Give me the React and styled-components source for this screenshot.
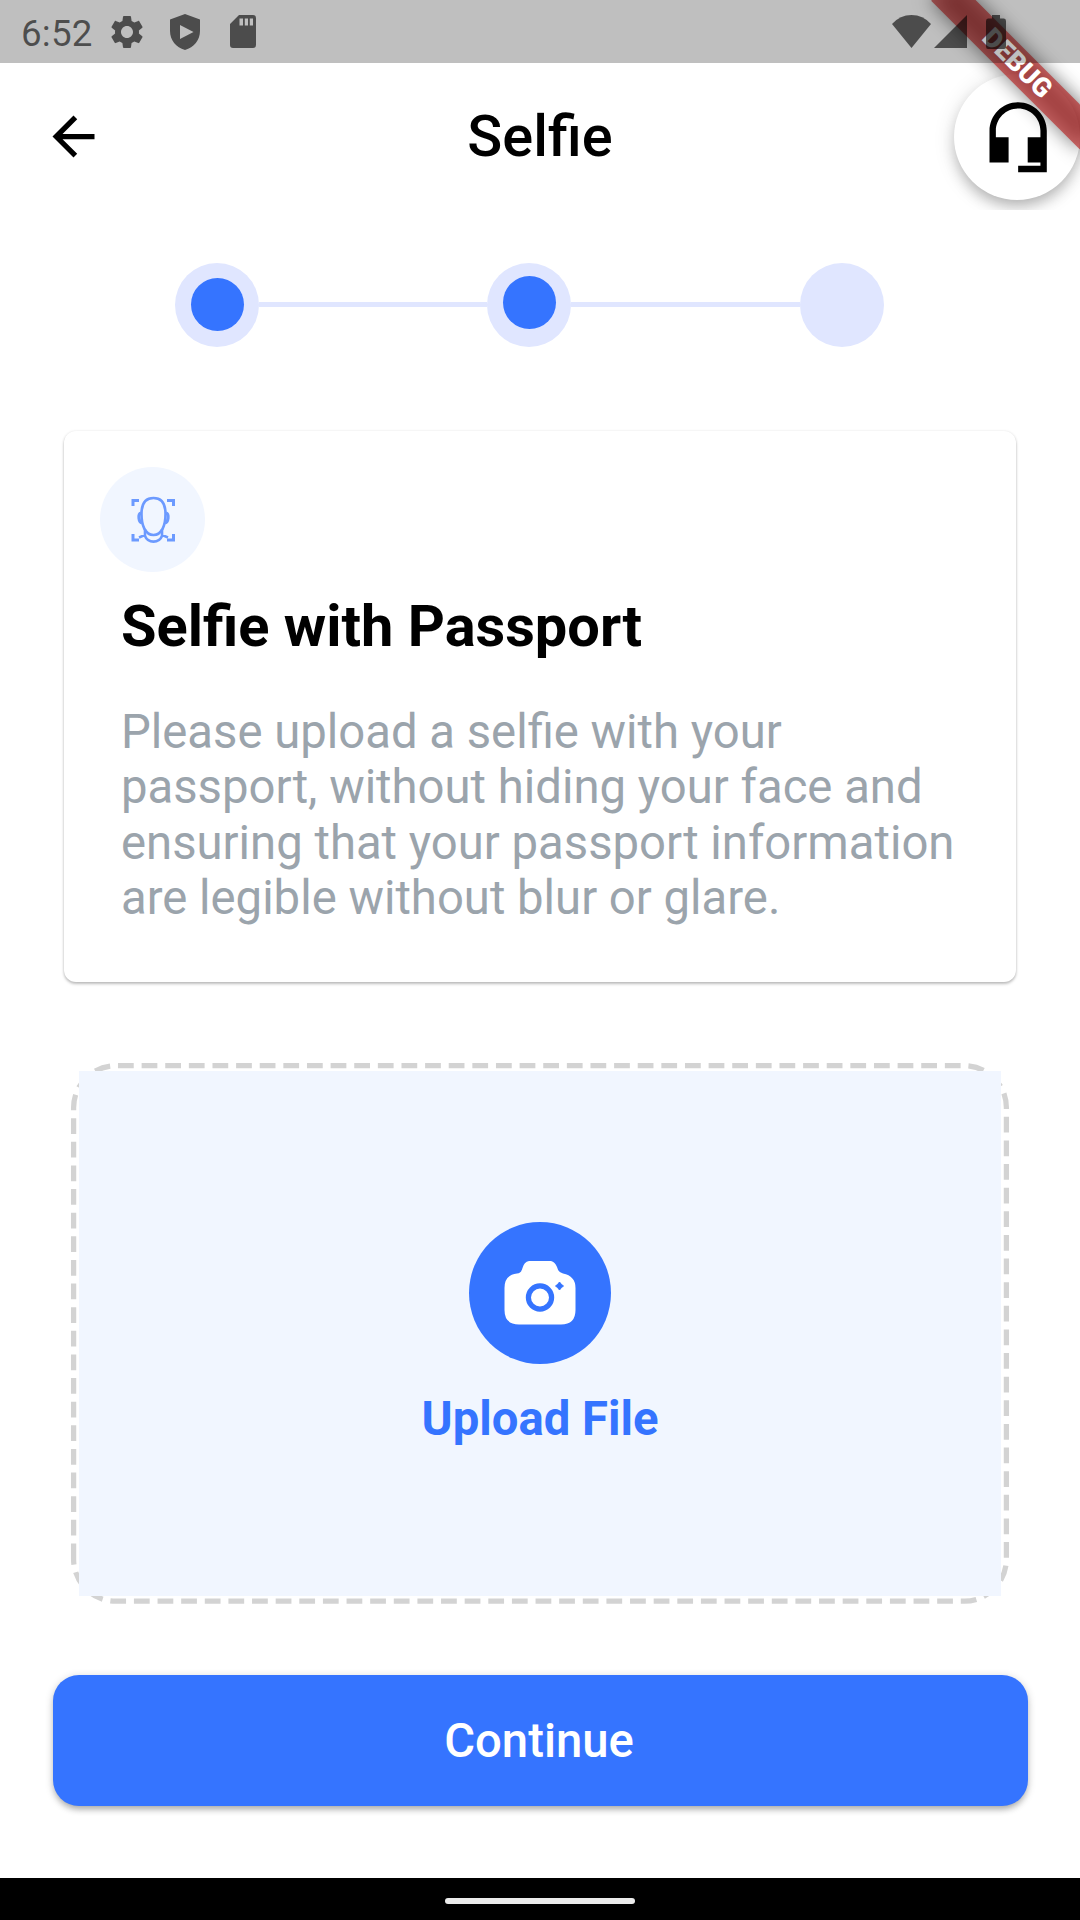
import React from "react";
import styled, { createGlobalStyle } from "styled-components";

const BLUE = "#3574ff";
const LILAC = "#e0e6ff";
const PALE = "#f1f6ff";

const GlobalStyle = createGlobalStyle`
  * { box-sizing: border-box; }
  body { margin: 0; background: #fff; font-family: Roboto, "Liberation Sans", sans-serif; }
`;

const Screen = styled.div`
  position: relative;
  width: 1080px;
  height: 1920px;
  overflow: hidden;
  display: flex;
  flex-direction: column;
  background: #fff;
`;

const StatusBar = styled.div`
  position: absolute;
  inset: 0 0 auto 0;
  height: 63px;
  background: rgba(0, 0, 0, 0.25);
  display: flex;
  justify-content: space-between;
  padding: 0 74px 0 21px;
  color: rgba(0, 0, 0, 0.6);
`;

const StatusGroup = styled.div`
  display: flex;
  align-items: center;
`;

const Clock = styled.span`
  font-size: 36.75px;
  line-height: 43px;
  letter-spacing: 0.2px;
  width: 86px;
  padding-top: 3px;
`;

const StatusIcon = styled.svg`
  display: block;
  flex: none;
  width: ${(p) => p.$w}px;
  height: ${(p) => p.$h}px;
  margin-left: ${(p) => p.$gap || 0}px;
  fill: currentColor;
`;

const Header = styled.header`
  height: 210px;
  flex: none;
  padding: 63px 0 0 42px;
  display: grid;
  grid-template-columns: 63px 1fr 126px;
  align-items: center;
  overflow: hidden;
  background: #fff;
`;

const Title = styled.h1`
  margin: 0 0 2px;
  padding-left: 21px;
  text-align: center;
  font-size: 57.75px;
  font-weight: 500;
  line-height: 68px;
  color: #000;
`;

const BackIcon = styled.svg`
  display: block;
  width: 63px;
  height: 63px;
`;

const SupportButton = styled.div`
  width: 126px;
  height: 126px;
  border-radius: 50%;
  background: #fff;
  display: flex;
  align-items: center;
  justify-content: center;
  box-shadow: 0 8px 14px -2px rgba(0, 0, 0, 0.24), 0 3px 22px rgba(0, 0, 0, 0.12);
`;

const Steps = styled.div`
  display: flex;
  align-items: center;
  padding: 53px 0 0 175px;
  height: 137px;
  flex: none;
`;

const Step = styled.div`
  width: 84px;
  height: 84px;
  border-radius: 50%;
  background: ${LILAC};
  display: flex;
  align-items: center;
  justify-content: center;
`;

const StepDot = styled.div`
  width: 53px;
  height: 53px;
  border-radius: 50%;
  background: ${BLUE};
  margin-bottom: ${(p) => p.$lift || 0}px;
`;

const StepLine = styled.div`
  width: 228.4px;
  height: 5.5px;
  margin-bottom: 1px;
  background: ${LILAC};
`;

const Card = styled.section`
  margin: 84px 64px 0;
  height: 551px;
  flex: none;
  border-radius: 12px;
  background: #fff;
  padding: 36px 36px 0;
  box-shadow: 0 2px 3px rgba(0, 0, 0, 0.25), 0 0 3px rgba(0, 0, 0, 0.08);
`;

const FaceBadge = styled.div`
  width: 105px;
  height: 105px;
  border-radius: 50%;
  background: ${PALE};
  display: flex;
  align-items: center;
  justify-content: center;
`;

const CardTitle = styled.h2`
  margin: 20px 0 0 21px;
  font-size: 57.75px;
  line-height: 68px;
  font-weight: 700;
  color: #000;
`;

const CardText = styled.p`
  margin: 45px 0 0 21px;
  font-size: 47.25px;
  line-height: 55.3px;
  color: #9ba4ac;
  white-space: nowrap;
`;

const UploadArea = styled.section`
  position: relative;
  margin: 89px 79px 0;
  height: 525px;
  flex: none;
`;

const DashedBorder = styled.svg`
  position: absolute;
  left: -9px;
  top: -9px;
  width: 940px;
  height: 543px;
`;

const UploadPanel = styled.div`
  position: relative;
  height: 100%;
  background: ${PALE};
  display: flex;
  flex-direction: column;
  align-items: center;
  padding-top: 151px;
`;

const CameraBadge = styled.div`
  width: 142px;
  height: 142px;
  border-radius: 50%;
  background: ${BLUE};
`;

const UploadLabel = styled.span`
  margin-top: 28px;
  font-size: 47.25px;
  line-height: 55px;
  font-weight: 700;
  color: ${BLUE};
`;

const ContinueButton = styled.button`
  margin: 78.5px 52.5px 0;
  height: 131px;
  flex: none;
  border: 0;
  border-radius: 26px;
  background: ${BLUE};
  color: #fff;
  font-family: inherit;
  font-size: 47.25px;
  font-weight: 500;
  padding: 2px 2px 0 0;
  box-shadow: 0 5px 6px -2px rgba(0, 0, 0, 0.22), 0 2px 8px rgba(0, 0, 0, 0.2);
`;

const NavigationBar = styled.footer`
  margin-top: auto;
  height: 42px;
  flex: none;
  background: #000;
  display: flex;
  align-items: center;
  justify-content: center;
`;

const HomeHandle = styled.div`
  width: 190px;
  height: 6px;
  border-radius: 3px;
  background: #ebebeb;
  margin-top: 4px;
`;

const DebugBanner = styled.div`
  position: absolute;
  left: 975px;
  top: 73.5px;
  width: 210px;
  height: 31.5px;
  transform-origin: 105px -73.5px;
  transform: rotate(45deg);
  background: rgba(183, 28, 28, 0.627);
  color: #fff;
  text-align: center;
  font-size: 26.8px;
  font-weight: 900;
  line-height: 31.5px;
`;

const BannerShadow = styled(DebugBanner)`
  background: rgba(0, 0, 0, 0.5);
  filter: blur(9.6px);
`;

export default function App() {
  return (
    <Screen>
      <GlobalStyle />
      <Header>
        <BackIcon viewBox="0 0 24 24">
          <path d="M20 11H7.83l5.59-5.59L12 4l-8 8 8 8 1.41-1.41L7.83 13H20v-2z" />
        </BackIcon>
        <Title>Selfie</Title>
        <SupportButton>
          <svg width="76.4" height="76.4" viewBox="-0.3 -0.3 24 24">
            <path d="M12 1c-4.97 0-9 4.03-9 9v10h6v-8H5v-2c0-3.87 3.13-7 7-7s7 3.13 7 7v2h-4v8h4v1h-7v2h9V10c0-4.97-4.03-9-9-9z" />
          </svg>
        </SupportButton>
      </Header>

      <Steps>
        <Step><StepDot $lift={1} /></Step>
        <StepLine />
        <Step><StepDot $lift={6} /></Step>
        <StepLine />
        <Step />
      </Steps>

      <Card>
        <FaceBadge>
          <svg width="46" height="48" viewBox="0 0 46 48" fill="none" stroke={BLUE} strokeWidth="2.6" opacity="0.7">
            <path d="M3 10V4.500H9M37 4.500H43.500V10M3 38V44H9M37 44H43.500V38" strokeWidth="3" />
            <path d="M23.500 2C15 2 11.500 8 11.500 18C11.500 29 15 39 23.500 39S35.500 29 35.500 18C35.500 8 32 2 23.500 2Z" />
            <path d="M11 17C7.500 18 8.500 26 12 27M36 17C39.500 18 38.500 26 35 27" strokeWidth="3" />
            <path d="M15 33V39L9 41.500M32 33V39L38 41.500M15 40C18 47.500 29 47.500 32 40" />
          </svg>
        </FaceBadge>
        <CardTitle>Selfie with Passport</CardTitle>
        <CardText>
          Please upload a selfie with your<br />
          passport, without hiding your face and<br />
          ensuring that your passport information<br />
          are legible without blur or glare.
        </CardText>
      </Card>

      <UploadArea>
        <DashedBorder viewBox="70 1062 940 543" fill="none">
          <path
            d="M73.600 1559.200V1107.700A42 42 0 0 1 115.600 1065.700H964.400A42 42 0 0 1 1006.400 1107.700V1559.200A42 42 0 0 1 964.400 1601.200H115.600A42 42 0 0 1 73.600 1559.200"
            stroke="#d3d3d3"
            strokeWidth="5.25"
            strokeDasharray="15.75 7.875"
          />
        </DashedBorder>
        <UploadPanel>
          <CameraBadge>
            <svg width="142" height="142" viewBox="0 0 142 142">
              <path fill="#fff" d="M60 39H82Q86 40 88 45Q89.500 51 94 51.500Q106.500 54 106.500 66V88Q106.500 102.500 92 102.500H50Q35.500 102.500 35.500 88V66Q35.500 53 48 51.500Q52.500 51 53.500 46Q55 40 60 39Z" />
              <circle cx="71" cy="75.500" r="11.600" fill="none" stroke={BLUE} strokeWidth="5.200" />
              <path fill={BLUE} d="M90.500 60Q92 62.500 94.500 64Q92 65.500 90.500 68Q89 65.500 86.500 64Q89 62.500 90.500 60Z" stroke={BLUE} strokeWidth="1" />
            </svg>
          </CameraBadge>
          <UploadLabel>Upload File</UploadLabel>
        </UploadPanel>
      </UploadArea>

      <ContinueButton>Continue</ContinueButton>

      <NavigationBar><HomeHandle /></NavigationBar>

      <BannerShadow />
      <DebugBanner>DEBUG</DebugBanner>

      <StatusBar>
        <StatusGroup>
          <Clock>6:52</Clock>
          <StatusIcon $w={40} $h={40} viewBox="0 0 24 24">
            <path d="M19.140 12.940c.04-.3.060-.61.060-.94 0-.32-.02-.64-.07-.94l2.030-1.580c.18-.14.230-.41.120-.61l-1.920-3.320c-.12-.22-.37-.29-.59-.22l-2.390.960c-.5-.38-1.030-.7-1.620-.94l-.36-2.540c-.04-.24-.24-.41-.48-.41h-3.840c-.24 0-.43.170-.47.410l-.36 2.540c-.59.240-1.130.570-1.620.940l-2.390-.96c-.22-.08-.47 0-.59.220L2.740 8.870c-.12.210-.08.470.120.610l2.030 1.580c-.05.300-.09.630-.09.940s.02.640.070.940l-2.030 1.580c-.18.140-.23.410-.12.610l1.920 3.320c.12.220.37.290.59.220l2.390-.96c.5.380 1.030.7 1.620.940l.36 2.540c.05.240.24.410.48.410h3.840c.24 0 .44-.17.470-.41l.36-2.540c.59-.24 1.130-.56 1.620-.94l2.390.960c.22.080.47 0 .59-.22l1.920-3.320c.12-.22.070-.47-.12-.61l-2.010-1.580zM12 15.600c-1.980 0-3.600-1.620-3.600-3.600s1.620-3.600 3.600-3.600 3.600 1.620 3.600 3.600-1.620 3.600-3.600 3.600z" />
          </StatusIcon>
          <StatusIcon $w={30} $h={36} $gap={23} viewBox="0 0 30 36">
            <path fillRule="evenodd" d="M15 0L30 5.500V17C30 26 24 33.500 15 36C6 33.500 0 26 0 17V5.500ZM10 11V25L23.500 18Z" />
          </StatusIcon>
          <StatusIcon $w={26} $h={33} $gap={30} viewBox="0 0 26 33">
            <path fillRule="evenodd" d="M9 0H23Q26 0 26 3V30Q26 33 23 33H3Q0 33 0 30V9ZM9.500 3.500V10.500H13V3.500ZM14.800 3.500V10.500H18V3.500ZM19.800 3.500V10.500H23V3.500Z" />
          </StatusIcon>
        </StatusGroup>
        <StatusGroup>
          <StatusIcon $w={39} $h={33} viewBox="0 0 39 33">
            <path d="M19.500 33L0 9Q8 0 19.500 0T39 9Z" />
          </StatusIcon>
          <StatusIcon $w={33} $h={33} $gap={3} viewBox="0 0 33 33">
            <path d="M33 0V33H0Z" />
          </StatusIcon>
          <StatusIcon $w={20} $h={34} $gap={19} viewBox="0 0 20 34">
            <path d="M6 0H14V3.500H18Q20 3.500 20 6V31.500Q20 34 18 34H2Q0 34 0 31.500V6Q0 3.500 2 3.500H6Z" />
          </StatusIcon>
        </StatusGroup>
      </StatusBar>
    </Screen>
  );
}
